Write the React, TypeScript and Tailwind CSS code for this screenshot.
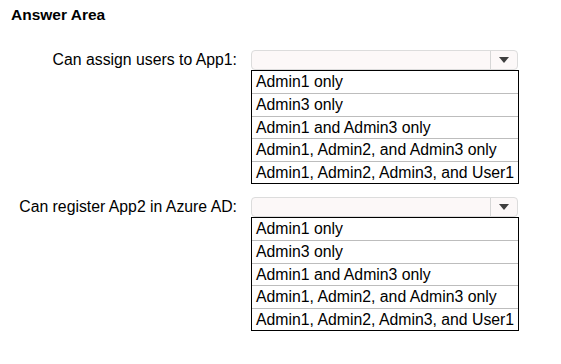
import React from 'react';

const OPTIONS = [
  'Admin1 only',
  'Admin3 only',
  'Admin1 and Admin3 only',
  'Admin1, Admin2, and Admin3 only',
  'Admin1, Admin2, Admin3, and User1',
];

const QUESTIONS = ['Can assign users to App1:', 'Can register App2 in Azure AD:'];

const DropdownBox: React.FC = () => (
  <div className="w-[267px] h-[20px] rounded-[4px] border border-[#dcdcdc] bg-[#fcf8f8] flex">
    <div className="flex-1" />
    <div className="w-[27px] h-full border-l border-[#d6d6d6] flex items-center justify-center">
      <svg width="10" height="6" viewBox="0 0 10 6">
        <polygon points="0,0 10,0 5,6" fill="#3f3f3f" />
      </svg>
    </div>
  </div>
);

const OptionList: React.FC = () => (
  <div className="w-[268px] border border-black bg-white">
    {OPTIONS.map((opt, i) => (
      <div
        key={opt}
        className={`h-[22.4px] leading-[22.4px] pl-[4px] whitespace-nowrap ${i > 0 ? 'border-t border-[#bdbdbd]' : ''}`}
      >
        {opt}
      </div>
    ))}
  </div>
);

export default function App() {
  return (
    <div
      className="w-[561px] h-[364px] bg-white text-black text-[15.8px] pl-[11px] pt-[6px]"
      style={{ fontFamily: '"Liberation Sans", Arial, sans-serif' }}
    >
      <div className="font-bold leading-[18px] text-[15.5px]">Answer Area</div>

      <div className="mt-[26px] flex flex-col gap-[13px] -ml-[11px]">
        {QUESTIONS.map((q) => (
          <div key={q} className="flex items-start">
            <div className="w-[237px] h-[20px] flex items-center justify-end whitespace-nowrap">{q}</div>
            <div className="ml-[14px] flex flex-col">
              <DropdownBox />
              <OptionList />
            </div>
          </div>
        ))}
      </div>
    </div>
  );
}
